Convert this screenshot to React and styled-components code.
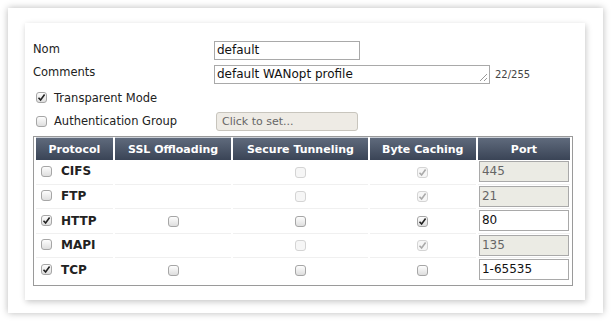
import React from 'react';
import styled, { createGlobalStyle } from 'styled-components';

const Global = createGlobalStyle`
  html, body {
    margin: 0;
    padding: 0;
    background: #fff;
  }
  body {
    font-family: "DejaVu Sans", Verdana, sans-serif;
    font-size: 11px;
    color: #222;
  }
`;

const Frame = styled.div`
  margin: 8px;
  width: 595px;
  height: 305px;
  box-sizing: border-box;
  background: #fff;
  box-shadow: 0 0 7px rgba(0, 0, 0, 0.28);
  padding: 15px 0 0 17px;
`;

const Panel = styled.div`
  width: 560px;
  height: 277px;
  box-sizing: border-box;
  background: #fff;
  box-shadow: 1px 2px 6px rgba(0, 0, 0, 0.22);
  padding: 16px 12px 0 8px;
`;

const Row = styled.div`
  display: flex;
  align-items: center;
  height: ${(p) => p.h || 24}px;
`;

const Label = styled.div`
  width: 181px;
  padding-bottom: 4px;
  font-size: 11.5px;
`;

const TextBox = styled.div`
  box-sizing: border-box;
  width: ${(p) => p.w}px;
  height: 19px;
  border: 1px solid #a9a9a9;
  padding: 2px 2px;
  line-height: 13px;
  font-size: 12px;
  background: ${(p) => (p.disabled ? '#ebebe4' : '#fff')};
  color: ${(p) => (p.disabled ? '#666' : '#111')};
  position: relative;
`;

const Grip = styled.svg`
  position: absolute;
  right: 1px;
  bottom: 1px;
`;

const Counter = styled.span`
  margin-left: 5px;
  font-size: 10px;
  color: #444;
`;

const CheckLabel = styled.label`
  display: flex;
  align-items: center;
  gap: 7px;
  padding-left: 3px;
  width: 178px;
  font-size: 11.5px;
`;

const Lookup = styled.div`
  box-sizing: border-box;
  width: 142px;
  height: 19px;
  margin-left: 2px;
  border: 1px solid #c8c5bd;
  border-radius: 3px;
  background: #eeebe5;
  color: #666;
  padding: 2px 5px;
  font-size: 11px;
`;

const Box = styled.span`
  display: inline-flex;
  align-items: center;
  justify-content: center;
  width: 11px;
  height: 11px;
  box-sizing: border-box;
  border: 1px solid ${(p) => (p.off ? '#d4d4d4' : '#a6a6a6')};
  border-radius: 3px;
  background: ${(p) =>
    p.off ? '#f6f6f6' : 'linear-gradient(#fdfdfd, #dedede)'};
  vertical-align: middle;
`;

const Check = ({ on, off }) => (
  <Box off={off}>
    {on && (
      <svg width="9" height="9" viewBox="0 0 9 9">
        <path
          d="M1.5 4.8 L3.6 7 L7.6 1.6"
          fill="none"
          stroke={off ? '#aaa' : '#222'}
          strokeWidth="1.6"
        />
      </svg>
    )}
  </Box>
);

const Table = styled.table`
  margin-top: 3px;
  width: 540px;
  border: 1px solid #9a9a9a;
  border-collapse: separate;
  border-spacing: 2px 0;
  padding: 0 0 2px 0;
`;

const Th = styled.th`
  height: 22px;
  padding: 0;
  width: ${(p) => p.w}px;
  background: linear-gradient(#5f6a7c, #3a4456);
  color: #fff;
  font-weight: bold;
  font-size: 11px;
  text-align: center;
  border-top: 1px solid #c9ced6;
`;

const Td = styled.td`
  height: 23.5px;
  padding: 0;
  border-bottom: 1px solid ${(p) => (p.last ? 'transparent' : '#f0f0f0')};
  text-align: ${(p) => (p.left ? 'left' : 'center')};
`;

const Proto = styled.span`
  display: inline-flex;
  align-items: center;
  gap: 9px;
  padding-left: 5px;
  font-weight: bold;
  font-size: 12px;
`;

const PortBox = styled(TextBox)`
  width: 90px;
  height: 21px;
  padding: 3px 2px;
  margin-left: 1px;
`;

const rows = [
  { name: 'CIFS', on: false, ssl: null, tun: 'off', byte: 'offOn', port: '445', fixed: true },
  { name: 'FTP', on: false, ssl: null, tun: 'off', byte: 'offOn', port: '21', fixed: true },
  { name: 'HTTP', on: true, ssl: false, tun: false, byte: true, port: '80' },
  { name: 'MAPI', on: false, ssl: null, tun: 'off', byte: 'offOn', port: '135', fixed: true },
  { name: 'TCP', on: true, ssl: false, tun: false, byte: false, port: '1-65535' },
];

const Cell = ({ v }) => {
  if (v === null) return null;
  if (v === 'off') return <Check off />;
  if (v === 'offOn') return <Check off on />;
  return <Check on={v} />;
};

export default function App() {
  return (
    <>
      <Global />
      <Frame>
        <Panel>
          <Row h={23}>
            <Label>Nom</Label>
            <TextBox w={146}>default</TextBox>
          </Row>
          <Row h={24}>
            <Label>Comments</Label>
            <TextBox w={276}>
              default WANopt profile
              <Grip width="12" height="12" viewBox="0 0 12 12">
                <path d="M11 4 L4 11 M11 8 L8 11" stroke="#999" strokeWidth="1" />
              </Grip>
            </TextBox>
            <Counter>22/255</Counter>
          </Row>
          <Row h={23}>
            <CheckLabel>
              <Check on />
              Transparent Mode
            </CheckLabel>
          </Row>
          <Row h={24}>
            <CheckLabel>
              <Check />
              Authentication Group
            </CheckLabel>
            <Lookup>Click to set...</Lookup>
          </Row>
          <Table>
            <thead>
              <tr>
                <Th w={77}>Protocol</Th>
                <Th w={117}>SSL Offloading</Th>
                <Th w={135}>Secure Tunneling</Th>
                <Th w={107}>Byte Caching</Th>
                <Th w={92}>Port</Th>
              </tr>
            </thead>
            <tbody>
              {rows.map((r, i) => {
                const last = i === rows.length - 1;
                return (
                  <tr key={r.name}>
                    <Td left last={last}>
                      <Proto>
                        <Check on={r.on} />
                        {r.name}
                      </Proto>
                    </Td>
                    <Td last={last}>
                      <Cell v={r.ssl} />
                    </Td>
                    <Td last={last}>
                      <Cell v={r.tun} />
                    </Td>
                    <Td last={last}>
                      <Cell v={r.byte} />
                    </Td>
                    <Td left last={last}>
                      <PortBox disabled={r.fixed}>{r.port}</PortBox>
                    </Td>
                  </tr>
                );
              })}
            </tbody>
          </Table>
        </Panel>
      </Frame>
    </>
  );
}
